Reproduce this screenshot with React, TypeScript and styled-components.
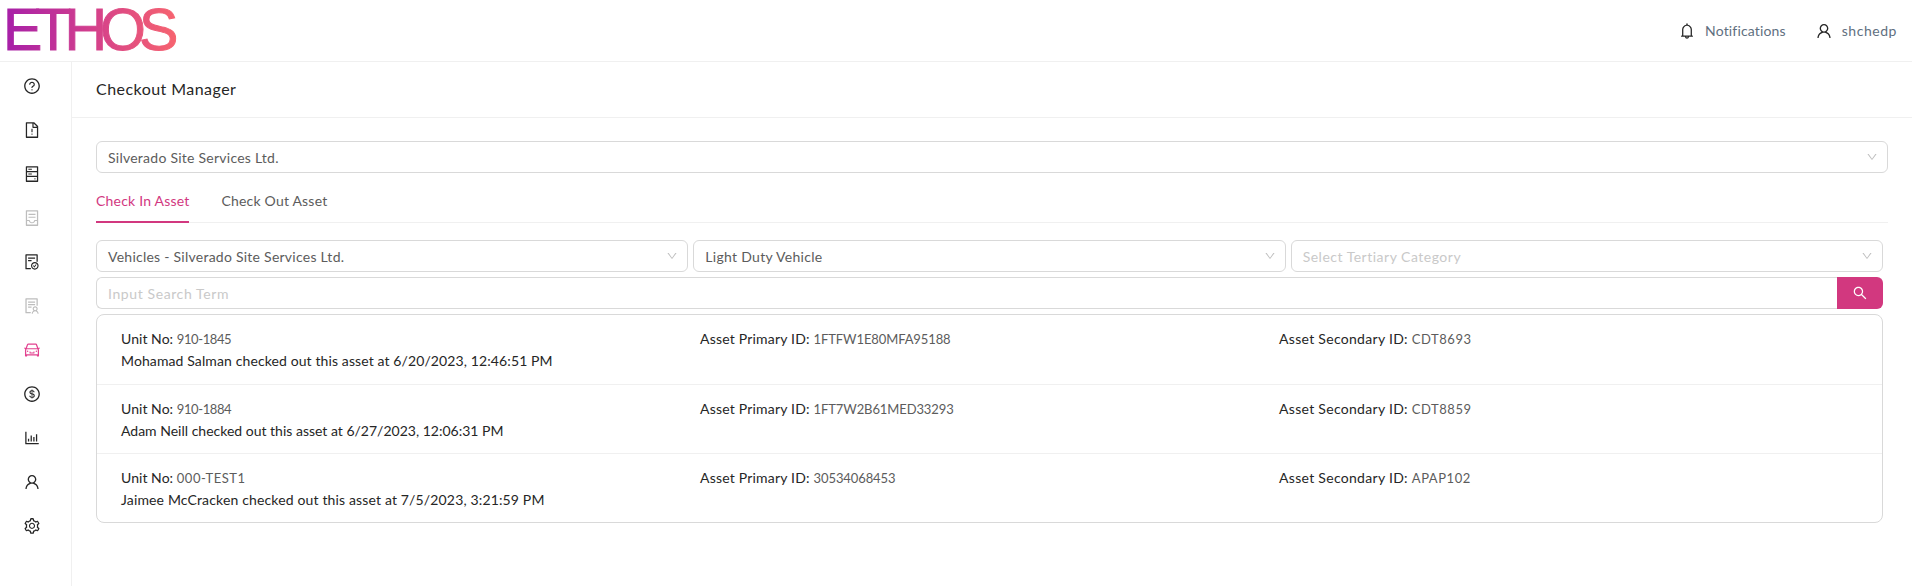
import React from "react";
import styled, { createGlobalStyle } from "styled-components";
import {
  AiOutlineQuestionCircle, AiOutlineFileExclamation, AiOutlineHdd, AiOutlineContainer,
  AiOutlineFileDone, AiOutlineSolution, AiOutlineCar, AiOutlineDollarCircle, AiOutlineBarChart,
  AiOutlineUser, AiOutlineSetting, AiOutlineBell, AiOutlineSearch, AiOutlineDown,
} from "react-icons/ai";

const Global = createGlobalStyle`
  html, body { margin: 0; padding: 0; background: #fff; }
  body { font-family: "Lato", "Noto Sans", sans-serif; font-size: 14px; color: #262626; }
  * { box-sizing: border-box; }
`;
const Page = styled.div`width: 1912px; height: 586px; display: flex; flex-direction: column; overflow: hidden;`;
const Header = styled.header`height: 61px; flex: none; display: flex; align-items: center; justify-content: space-between; padding: 0 15px 0 3px;`;
const Logo = styled.div`
  font-family: "Liberation Sans", Arial, sans-serif; font-size: 59px; line-height: 61px; letter-spacing: -7px;
  -webkit-text-stroke: 1px transparent; padding-right: 24px; margin-right: -12px; white-space: nowrap;
  background: linear-gradient(90deg, #a51fa9 0%, #d33f8c 46%, #f8656e 92%);
  -webkit-background-clip: text; background-clip: text; color: transparent;
`;
const HeaderLinks = styled.div`display: flex; align-items: center; gap: 29px;`;
const HeaderLink = styled.div<{ $ls: number }>`
  display: flex; align-items: center; gap: 9px; color: #5f6f80; font-size: 14px; letter-spacing: ${(p) => p.$ls}px;
  svg { color: #262626; font-size: 18px; }
`;
const Body = styled.div`flex: 1; display: flex; min-height: 0; border-top: 1px solid #f0f0f0;`;
const Sidebar = styled.nav`width: 72px; flex: none; padding-top: 2px; border-right: 1px solid #f0f0f0; display: flex; flex-direction: column;`;
const NavItem = styled.div<{ $state?: "active" | "disabled" }>`
  height: 44px; display: flex; align-items: center; justify-content: center; padding-right: 7px; font-size: 18px;
  color: ${(p) => (p.$state === "active" ? "#e2418f" : p.$state === "disabled" ? "#bdbdbd" : "#262626")};
`;
const Main = styled.main`flex: 1; min-width: 0;`;
const TitleBar = styled.div`height: 56px; padding: 0 24px 2px; display: flex; align-items: center; border-bottom: 1px solid #f0f0f0; font-size: 16px; letter-spacing: 0.45px; color: #262626;`;
const Content = styled.div`padding: 23px 24px 0;`;
const SelectBox = styled.div<{ $muted?: boolean; $ls?: number }>`
  flex: 1; height: 32px; min-width: 0; border: 1px solid #d9d9d9; border-radius: 6px; background: #fff; padding: 0 9px 0 11px;
  display: flex; align-items: center; justify-content: space-between;
  color: ${(p) => (p.$muted ? "#c9c9c9" : "#5c5c5c")}; letter-spacing: ${(p) => p.$ls ?? 0.25}px; font-size: 14px;
  svg { color: #bfbfbf; font-size: 12px; flex: none; }
`;
const Tabs = styled.div`display: flex; gap: 32px; height: 50px; border-bottom: 1px solid #f0f0f0; margin-bottom: 17px;`;
const Tab = styled.div<{ $active?: boolean }>`
  height: 50px; padding-top: 18px; line-height: 20px; letter-spacing: 0.2px; color: ${(p) => (p.$active ? "#d2387f" : "#5c5c5c")};
  border-bottom: 2px solid ${(p) => (p.$active ? "#d2387f" : "transparent")};
`;
const Narrow = styled.div`width: 1787px;`;
const SelectRow = styled.div`display: flex; gap: 5px; margin-bottom: 5px;`;
const SearchRow = styled.div`display: flex; height: 32px; margin-bottom: 5px;`;
const SearchInput = styled.div`
  flex: 1; border: 1px solid #d9d9d9; border-right: none; border-radius: 6px 0 0 6px; padding: 0 11px; display: flex; align-items: center;
  color: #c9c9c9; font-size: 14px; letter-spacing: 0.6px;
`;
const SearchButton = styled.div`width: 46px; background: #d2387f; color: #fff; border-radius: 0 6px 6px 0; display: flex; align-items: center; justify-content: center; font-size: 16px;`;
const List = styled.div`border: 1px solid #d9d9d9; border-radius: 8px;`;
const Row = styled.div`
  height: 69px; padding: 13px 24px 0; display: grid; grid-template-columns: repeat(3, 1fr); grid-auto-rows: 22px;
  & + & { border-top: 1px solid #f0f0f0; }
`;
const Cell = styled.div<{ $ls: number }>`line-height: 22px; letter-spacing: ${(p) => p.$ls}px; color: #262626; white-space: nowrap;`;
const Value = styled.span<{ $ls: number }>`color: #5c5c5c; font-size: 13px; letter-spacing: ${(p) => p.$ls}px;`;
const Note = styled(Cell)`grid-column: 1 / -1;`;

const rows = [
  { unit: "910-1845", unitLs: -0.4, noteLs: 0.11, primary: "1FTFW1E80MFA95188", secondary: "CDT8693", note: "Mohamad Salman checked out this asset at 6/20/2023, 12:46:51 PM" },
  { unit: "910-1884", unitLs: -0.4, noteLs: 0, primary: "1FT7W2B61MED33293", secondary: "CDT8859", note: "Adam Neill checked out this asset at 6/27/2023, 12:06:31 PM" },
  { unit: "000-TEST1", unitLs: 0.5, noteLs: 0.15, primary: "30534068453", secondary: "APAP102", note: "Jaimee McCracken checked out this asset at 7/5/2023, 3:21:59 PM" },
];
const nav: [React.ComponentType, ("active" | "disabled")?][] = [
  [AiOutlineQuestionCircle], [AiOutlineFileExclamation], [AiOutlineHdd], [AiOutlineContainer, "disabled"],
  [AiOutlineFileDone], [AiOutlineSolution, "disabled"], [AiOutlineCar, "active"], [AiOutlineDollarCircle],
  [AiOutlineBarChart], [AiOutlineUser], [AiOutlineSetting],
];

export default function App() {
  return (
    <Page>
      <Global />
      <Header>
        <Logo>ETHOS</Logo>
        <HeaderLinks>
          <HeaderLink $ls={0.15}><AiOutlineBell />Notifications</HeaderLink>
          <HeaderLink $ls={0.55}><AiOutlineUser />shchedp</HeaderLink>
        </HeaderLinks>
      </Header>
      <Body>
        <Sidebar>
          {nav.map(([Icon, state], i) => <NavItem key={i} $state={state}><Icon /></NavItem>)}
        </Sidebar>
        <Main>
          <TitleBar>Checkout Manager</TitleBar>
          <Content>
            <SelectBox>Silverado Site Services Ltd.<AiOutlineDown /></SelectBox>
            <Tabs>
              <Tab $active>Check In Asset</Tab>
              <Tab>Check Out Asset</Tab>
            </Tabs>
            <Narrow>
              <SelectRow>
                <SelectBox>Vehicles - Silverado Site Services Ltd.<AiOutlineDown /></SelectBox>
                <SelectBox $ls={0.3}>Light Duty Vehicle<AiOutlineDown /></SelectBox>
                <SelectBox $muted $ls={0.5}>Select Tertiary Category<AiOutlineDown /></SelectBox>
              </SelectRow>
              <SearchRow>
                <SearchInput>Input Search Term</SearchInput>
                <SearchButton><AiOutlineSearch /></SearchButton>
              </SearchRow>
              <List>
                {rows.map((r) => (
                  <Row key={r.unit}>
                    <Cell $ls={0.05}>Unit No: <Value $ls={r.unitLs}>{r.unit}</Value></Cell>
                    <Cell $ls={0.2}>Asset Primary ID: <Value $ls={-0.1}>{r.primary}</Value></Cell>
                    <Cell $ls={0.3}>Asset Secondary ID: <Value $ls={0.55}>{r.secondary}</Value></Cell>
                    <Note $ls={r.noteLs}>{r.note}</Note>
                  </Row>
                ))}
              </List>
            </Narrow>
          </Content>
        </Main>
      </Body>
    </Page>
  );
}
